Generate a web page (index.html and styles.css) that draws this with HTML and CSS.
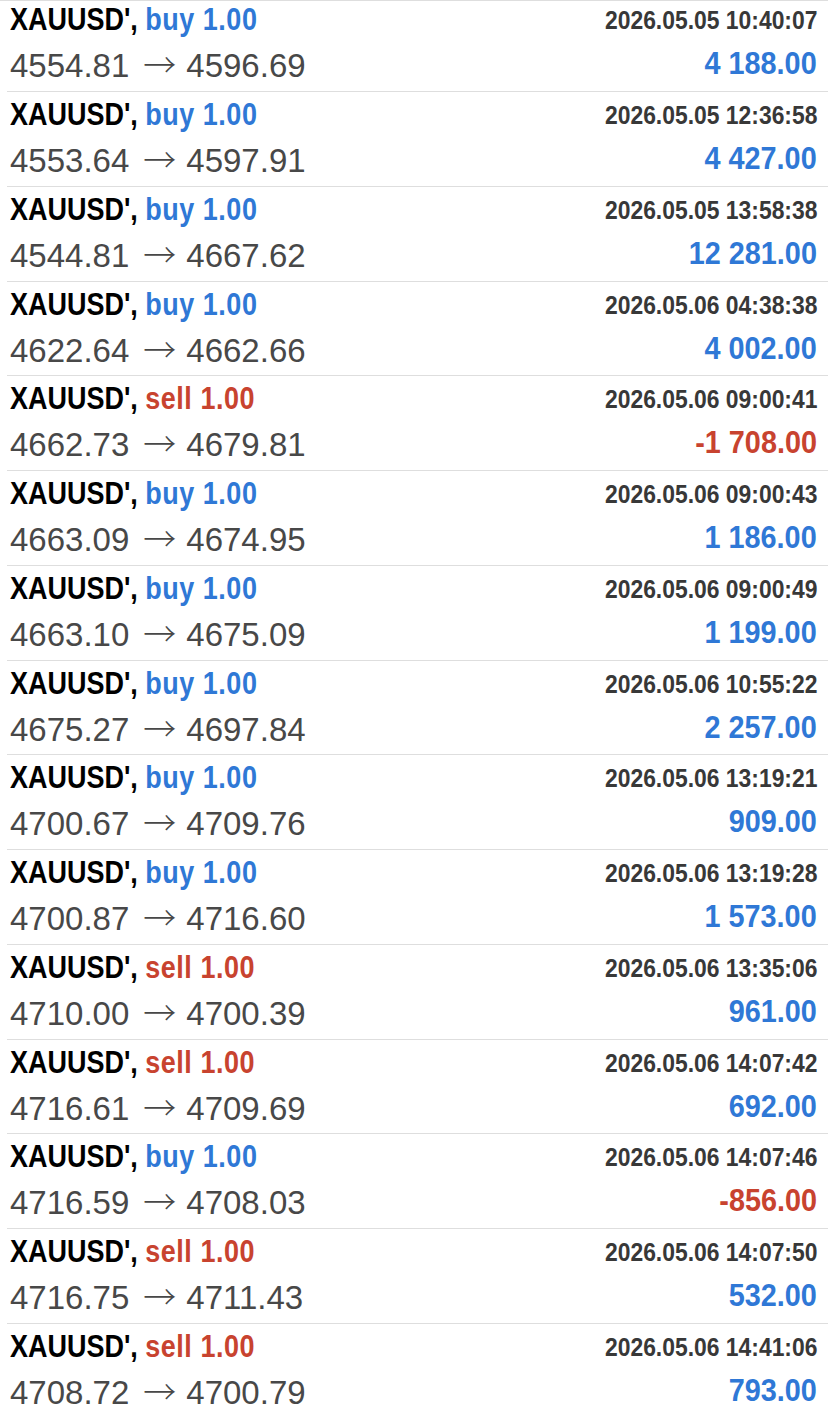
FILE: index.html
```html
<!DOCTYPE html>
<html>
<head>
<meta charset="utf-8">
<link rel="stylesheet" href="styles.css">
</head>
<body>
<div class="list">
  <div class="row"><div class="l1"><span class="head"><span class="sym">XAUUSD',</span> <span class="buy">buy 1.00</span></span><span class="date">2026.05.05 10:40:07</span></div><div class="l2"><span class="px">4554.81<span class="arr">→</span>4596.69</span><span class="amt pos">4 188.00</span></div></div>
  <div class="row"><div class="l1"><span class="head"><span class="sym">XAUUSD',</span> <span class="buy">buy 1.00</span></span><span class="date">2026.05.05 12:36:58</span></div><div class="l2"><span class="px">4553.64<span class="arr">→</span>4597.91</span><span class="amt pos">4 427.00</span></div></div>
  <div class="row"><div class="l1"><span class="head"><span class="sym">XAUUSD',</span> <span class="buy">buy 1.00</span></span><span class="date">2026.05.05 13:58:38</span></div><div class="l2"><span class="px">4544.81<span class="arr">→</span>4667.62</span><span class="amt pos">12 281.00</span></div></div>
  <div class="row"><div class="l1"><span class="head"><span class="sym">XAUUSD',</span> <span class="buy">buy 1.00</span></span><span class="date">2026.05.06 04:38:38</span></div><div class="l2"><span class="px">4622.64<span class="arr">→</span>4662.66</span><span class="amt pos">4 002.00</span></div></div>
  <div class="row"><div class="l1"><span class="head"><span class="sym">XAUUSD',</span> <span class="sell">sell 1.00</span></span><span class="date">2026.05.06 09:00:41</span></div><div class="l2"><span class="px">4662.73<span class="arr">→</span>4679.81</span><span class="amt neg">-1 708.00</span></div></div>
  <div class="row"><div class="l1"><span class="head"><span class="sym">XAUUSD',</span> <span class="buy">buy 1.00</span></span><span class="date">2026.05.06 09:00:43</span></div><div class="l2"><span class="px">4663.09<span class="arr">→</span>4674.95</span><span class="amt pos">1 186.00</span></div></div>
  <div class="row"><div class="l1"><span class="head"><span class="sym">XAUUSD',</span> <span class="buy">buy 1.00</span></span><span class="date">2026.05.06 09:00:49</span></div><div class="l2"><span class="px">4663.10<span class="arr">→</span>4675.09</span><span class="amt pos">1 199.00</span></div></div>
  <div class="row"><div class="l1"><span class="head"><span class="sym">XAUUSD',</span> <span class="buy">buy 1.00</span></span><span class="date">2026.05.06 10:55:22</span></div><div class="l2"><span class="px">4675.27<span class="arr">→</span>4697.84</span><span class="amt pos">2 257.00</span></div></div>
  <div class="row"><div class="l1"><span class="head"><span class="sym">XAUUSD',</span> <span class="buy">buy 1.00</span></span><span class="date">2026.05.06 13:19:21</span></div><div class="l2"><span class="px">4700.67<span class="arr">→</span>4709.76</span><span class="amt pos">909.00</span></div></div>
  <div class="row"><div class="l1"><span class="head"><span class="sym">XAUUSD',</span> <span class="buy">buy 1.00</span></span><span class="date">2026.05.06 13:19:28</span></div><div class="l2"><span class="px">4700.87<span class="arr">→</span>4716.60</span><span class="amt pos">1 573.00</span></div></div>
  <div class="row"><div class="l1"><span class="head"><span class="sym">XAUUSD',</span> <span class="sell">sell 1.00</span></span><span class="date">2026.05.06 13:35:06</span></div><div class="l2"><span class="px">4710.00<span class="arr">→</span>4700.39</span><span class="amt pos">961.00</span></div></div>
  <div class="row"><div class="l1"><span class="head"><span class="sym">XAUUSD',</span> <span class="sell">sell 1.00</span></span><span class="date">2026.05.06 14:07:42</span></div><div class="l2"><span class="px">4716.61<span class="arr">→</span>4709.69</span><span class="amt pos">692.00</span></div></div>
  <div class="row"><div class="l1"><span class="head"><span class="sym">XAUUSD',</span> <span class="buy">buy 1.00</span></span><span class="date">2026.05.06 14:07:46</span></div><div class="l2"><span class="px">4716.59<span class="arr">→</span>4708.03</span><span class="amt neg">-856.00</span></div></div>
  <div class="row"><div class="l1"><span class="head"><span class="sym">XAUUSD',</span> <span class="sell">sell 1.00</span></span><span class="date">2026.05.06 14:07:50</span></div><div class="l2"><span class="px">4716.75<span class="arr">→</span>4711.43</span><span class="amt pos">532.00</span></div></div>
  <div class="row"><div class="l1"><span class="head"><span class="sym">XAUUSD',</span> <span class="sell">sell 1.00</span></span><span class="date">2026.05.06 14:41:06</span></div><div class="l2"><span class="px">4708.72<span class="arr">→</span>4700.79</span><span class="amt pos">793.00</span></div></div>
</div>
</body>
</html>
```
FILE: styles.css
```css
html, body {
  margin: 0;
  padding: 0;
  background: #ffffff;
  overflow: hidden;
}
.list {
  display: flex;
  flex-direction: column;
  border-top: 1px solid #dedede;
}
.row {
  flex: none;
  height: 94.77px;
  box-sizing: border-box;
  margin-left: 7px;
  padding: 0 11px 0 3px;
  border-bottom: 1px solid #dedede;
  display: flex;
  flex-direction: column;
}
.row:first-child {
  margin-top: -3.77px;
}
.l1, .l2 {
  display: flex;
  align-items: flex-start;
  white-space: pre;
}
.l1 {
  height: 46px;
}
.l2 {
  flex: 1;
}
.head, .date, .amt {
  display: inline-block;
  font-family: "Liberation Sans", Arial, sans-serif;
  font-weight: bold;
}
.head {
  font-size: 31px;
  line-height: 46px;
  transform: scaleX(0.87);
  transform-origin: left center;
}
.sym {
  color: #000000;
}
.buy, .sell {
  letter-spacing: 0.6px;
}
.buy { color: #2f78d6; }
.sell { color: #c8432f; }
.date {
  margin-left: auto;
  font-size: 26px;
  line-height: 46px;
  color: #383838;
  transform: scaleX(0.88);
  transform-origin: right center;
}
.px {
  font-family: "Liberation Sans", Arial, sans-serif;
  font-size: 33px;
  line-height: 45px;
  color: #484848;
}
.arr {
  font-family: "Noto Sans CJK JP", "DejaVu Sans", sans-serif;
  font-weight: 300;
  line-height: 0;
  margin: 0 10px 0 14px;
}
.amt {
  margin-left: auto;
  font-size: 31px;
  line-height: 42px;
  transform: scaleX(0.93);
  transform-origin: right center;
}
.pos { color: #2f78d6; }
.neg { color: #c8432f; }
```
